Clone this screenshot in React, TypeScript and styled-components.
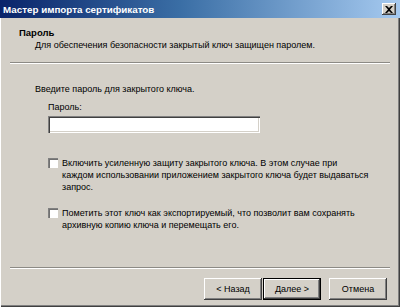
import React from 'react';
import styled, { createGlobalStyle } from 'styled-components';

const GlobalStyle = createGlobalStyle`
    html, body {
        margin: 0;
        padding: 0;
        background: #d4d0c8;
    }
    body {
        font-family: "Liberation Sans", Arial, sans-serif;
        font-size: 9px;
        color: #000;
    }
`;

const Window = styled.div`
    display: flex;
    flex-direction: column;
    box-sizing: border-box;
    width: 400px;
    height: 307px;
    background: #d4d0c8;
    overflow: hidden;
`;

const TitleBar = styled.div`
    display: flex;
    align-items: center;
    justify-content: space-between;
    height: 18px;
    flex: none;
    padding: 0 4px 0 3px;
    background: linear-gradient(to right, #0a246a 0%, #3a6ea5 45%, #a6caf0 100%);
    color: #fff;
    font-weight: bold;
    font-size: 9.8px;
`;

const CloseButton = styled.div`
    display: flex;
    align-items: center;
    justify-content: center;
    width: 14px;
    height: 12px;
    background: #d4d0c8;
    box-shadow: inset -1px -1px #404040, inset 1px 1px #fff, inset -2px -2px #808080;
`;

const Client = styled.div`
    display: flex;
    flex-direction: column;
    flex: 1;
    box-shadow: inset 1px 0 #fff, inset -1px -1px #404040, inset -2px -2px #808080;
    padding: 0 3px 3px 3px;
`;

const Header = styled.div`
    display: flex;
    flex-direction: column;
    align-items: flex-start;
    padding: 9px 0 0 16px;
`;

const HeaderTitle = styled.div`
    font-weight: bold;
    font-size: 9.5px;
    line-height: 12px;
`;

const Line = styled.div<{ $indent?: number }>`
    line-height: 12px;
    white-space: nowrap;
    margin-left: ${(p) => p.$indent ?? 0}px;
`;

const Separator = styled.div<{ $top: number }>`
    margin: ${(p) => p.$top}px 7px 0 7px;
    height: 0;
    border-top: 1px solid #8c8a85;
    border-bottom: 1px solid #fff;
`;

const Body = styled.div`
    flex: 1;
    display: flex;
    flex-direction: column;
    padding: 19px 0 0 32px;
`;

const Field = styled.div`
    display: flex;
    flex-direction: column;
    gap: 3px;
    margin: 6px 0 0 13px;
`;

const PasswordInput = styled.div`
    width: 212px;
    height: 17px;
    box-sizing: border-box;
    background: #fff;
    box-shadow: inset 1px 1px #808080, inset 2px 2px #404040, inset -1px -1px #fff, inset -2px -2px #d4d0c8;
`;

const CheckRow = styled.div<{ $top: number }>`
    display: flex;
    align-items: flex-start;
    gap: 4px;
    margin: ${(p) => p.$top}px 0 0 13px;
`;

const CheckBox = styled.div`
    flex: none;
    width: 10px;
    height: 10px;
    margin-top: 1px;
    box-sizing: border-box;
    background: #fff;
    box-shadow: inset 1px 1px #808080, inset 2px 2px #707070, inset -1px -1px #fff;
`;

const Footer = styled.div`
    display: flex;
    justify-content: flex-end;
    align-items: flex-start;
    height: 35px;
    box-sizing: border-box;
    padding: 9px 10px 0 0;
`;

const Button = styled.div<{ $default?: boolean; $gap?: number }>`
    display: flex;
    align-items: center;
    justify-content: center;
    box-sizing: border-box;
    width: 58px;
    height: 22px;
    margin-left: ${(p) => p.$gap ?? 0}px;
    background: #d4d0c8;
    border: ${(p) => (p.$default ? '1px solid #000' : 'none')};
    box-shadow: inset -1px -1px #404040, inset 1px 1px #fff, inset -2px -2px #808080;
`;

const App: React.FC = () => (
    <>
        <GlobalStyle />
        <Window>
            <TitleBar>
                <span>Мастер импорта сертификатов</span>
                <CloseButton>
                    <svg width="8" height="7" viewBox="0 0 8 7">
                        <path d="M0 0 L2 0 L4 2 L6 0 L8 0 L5 3.5 L8 7 L6 7 L4 5 L2 7 L0 7 L3 3.5 Z" fill="#000" />
                    </svg>
                </CloseButton>
            </TitleBar>
            <Client>
                <Header>
                    <HeaderTitle>Пароль</HeaderTitle>
                    <Line $indent={16}>Для обеспечения безопасности закрытый ключ защищен паролем.</Line>
                </Header>
                <Separator $top={11} />
                <Body>
                    <Line>Введите пароль для закрытого ключа.</Line>
                    <Field>
                        <Line>Пароль:</Line>
                        <PasswordInput />
                    </Field>
                    <CheckRow $top={24}>
                        <CheckBox />
                        <div>
                            <Line>Включить усиленную защиту закрытого ключа. В этом случае при</Line>
                            <Line>каждом использовании приложением закрытого ключа будет выдаваться</Line>
                            <Line>запрос.</Line>
                        </div>
                    </CheckRow>
                    <CheckRow $top={14}>
                        <CheckBox />
                        <div>
                            <Line>Пометить этот ключ как экспортируемый, что позволит вам сохранять</Line>
                            <Line>архивную копию ключа и перемещать его.</Line>
                        </div>
                    </CheckRow>
                </Body>
                <Separator $top={0} />
                <Footer>
                    <Button>&lt; Назад</Button>
                    <Button $default $gap={1}>Далее &gt;</Button>
                    <Button $gap={8}>Отмена</Button>
                </Footer>
            </Client>
        </Window>
    </>
);

export default App;
